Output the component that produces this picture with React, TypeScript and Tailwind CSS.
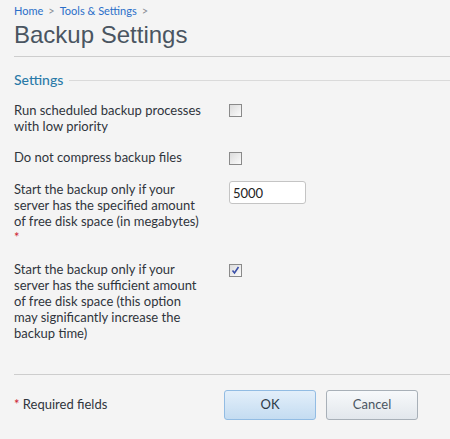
import React from "react";

function Checkbox({ checked = false }: { checked?: boolean }) {
  return (
    <span className="inline-flex h-[13px] w-[13px] items-center justify-center border border-[#8a8a8a] bg-gradient-to-br from-[#dcdcdc] to-[#fbfbfb]">
      {checked && (
        <svg width="9" height="9" viewBox="0 0 9 9">
          <path d="M1.5 4.5 L3.5 7 L7.5 1" fill="none" stroke="#3a4fa8" strokeWidth="1.6" />
        </svg>
      )}
    </span>
  );
}

export default function App() {
  const font = "font-['Lato','Noto_Sans',sans-serif]";
  return (
    <div className={`min-h-[439px] w-[450px] bg-[#f4f4f4] pl-[14px] text-[#30353c] ${font}`}>
      {/* Breadcrumbs */}
      <div className="pt-[4px] text-[11px] leading-[14px] text-[#2a6fc9]">
        <span>Home</span>
        <span className="mx-[5px] text-[#8a8f96]">&gt;</span>
        <span>Tools &amp; Settings</span>
        <span className="ml-[5px] text-[#8a8f96]">&gt;</span>
      </div>
      <h1 className="mt-[2px] font-['Liberation_Sans',Arial,sans-serif] text-[24px] leading-[30px] text-[#4a5561]">
        Backup Settings
      </h1>
      <div className="mt-[6px] border-t border-[#cdcdcd]" />

      {/* Fieldset */}
      <div className="mt-[15px] flex items-center">
        <span className="text-[14px] font-medium leading-[16px] text-[#2a7aa8]">Settings</span>
        <div className="ml-[6px] flex-1 border-t border-[#dadada]" />
      </div>

      <div className="mt-[14px] text-[13px] leading-[16px]">
        <div className="flex">
          <div className="w-[215px]">
            Run scheduled backup processes
            <br />
            with low priority
          </div>
          <div className="pt-[2px]">
            <Checkbox />
          </div>
        </div>

        <div className="mt-[15px] flex">
          <div className="w-[215px]">Do not compress backup files</div>
          <div className="pt-[3px]">
            <Checkbox />
          </div>
        </div>

        <div className="mt-[13px] flex">
          <div className="w-[215px]">
            Start the backup only if your
            <br />
            server has the specified amount
            <br />
            of free disk space (in megabytes)
            <br />
            <span className="text-[#cc2030]">*</span>
          </div>
          <div>
            <input
              defaultValue="5000"
              className="h-[23px] w-[77px] rounded-[3px] border border-[#c4c4c4] bg-white px-[3px] text-[13px] text-[#222] outline-none"
            />
          </div>
        </div>

        <div className="mt-[16px] flex">
          <div className="w-[215px]">
            Start the backup only if your
            <br />
            server has the sufficient amount
            <br />
            of free disk space (this option
            <br />
            may significantly increase the
            <br />
            backup time)
          </div>
          <div className="pt-[1px]">
            <Checkbox checked />
          </div>
        </div>
      </div>

      <div className="mt-[33px] border-t border-[#cdcdcd]" />

      <div className="mt-[15px] flex items-center">
        <div className="w-[210px] text-[13px]">
          <span className="text-[#cc2030]">*</span> Required fields
        </div>
        <button className="h-[30px] w-[92px] rounded-[3px] border border-[#92bce3] bg-gradient-to-b from-[#e3effa] to-[#c4dcf1] text-[13px] text-[#2d3a48]">
          OK
        </button>
        <button className="ml-[10px] h-[30px] w-[92px] rounded-[3px] border border-[#a8b0b8] bg-gradient-to-b from-[#f7f9fb] to-[#e2e7ec] text-[13px] text-[#4a5561]">
          Cancel
        </button>
      </div>
    </div>
  );
}
